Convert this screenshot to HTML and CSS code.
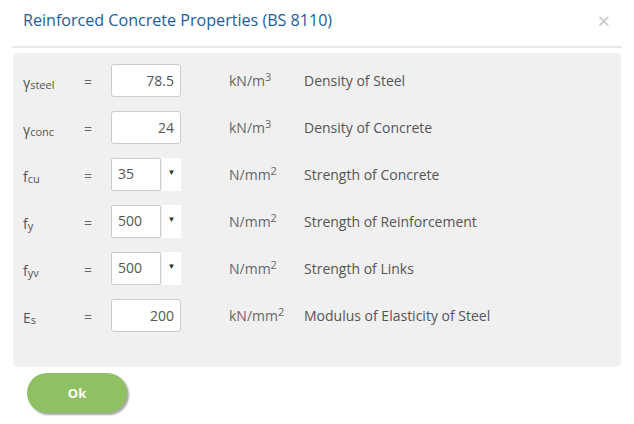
FILE: index.html
```html
<!DOCTYPE html>
<html>
<head>
<meta charset="utf-8">
<link rel="stylesheet" href="styles.css">
</head>
<body>
<div class="modal">
  <div class="header">
    <h1 class="title">Reinforced Concrete Properties (BS 8110)</h1>
    <span class="close">×</span>
  </div>
  <div class="panel">
    <div class="row">
      <div class="sym">γ<sub>steel</sub></div>
      <div class="eq">=</div>
      <div class="field"><div class="input">78.5</div></div>
      <div class="unit">kN/m<sup>3</sup></div>
      <div class="desc">Density of Steel</div>
    </div>
    <div class="row">
      <div class="sym">γ<sub>conc</sub></div>
      <div class="eq">=</div>
      <div class="field"><div class="input">24</div></div>
      <div class="unit">kN/m<sup>3</sup></div>
      <div class="desc">Density of Concrete</div>
    </div>
    <div class="row">
      <div class="sym">f<sub>cu</sub></div>
      <div class="eq">=</div>
      <div class="field"><div class="select"><span class="sel-val">35</span><span class="arrow">▼</span></div></div>
      <div class="unit">N/mm<sup>2</sup></div>
      <div class="desc">Strength of Concrete</div>
    </div>
    <div class="row">
      <div class="sym">f<sub>y</sub></div>
      <div class="eq">=</div>
      <div class="field"><div class="select"><span class="sel-val">500</span><span class="arrow">▼</span></div></div>
      <div class="unit">N/mm<sup>2</sup></div>
      <div class="desc">Strength of Reinforcement</div>
    </div>
    <div class="row">
      <div class="sym">f<sub>yv</sub></div>
      <div class="eq">=</div>
      <div class="field"><div class="select"><span class="sel-val">500</span><span class="arrow">▼</span></div></div>
      <div class="unit">N/mm<sup>2</sup></div>
      <div class="desc">Strength of Links</div>
    </div>
    <div class="row">
      <div class="sym">E<sub>s</sub></div>
      <div class="eq">=</div>
      <div class="field"><div class="input">200</div></div>
      <div class="unit">kN/mm<sup>2</sup></div>
      <div class="desc">Modulus of Elasticity of Steel</div>
    </div>
  </div>
  <div class="footer">
    <button class="ok">Ok</button>
  </div>
</div>
</body>
</html>
```

FILE: styles.css
```css
* { box-sizing: border-box; }
html, body { margin: 0; padding: 0; background: #fff; }
body {
  font-family: "Open Sans", "Noto Sans", sans-serif;
  color: #555;
  width: 634px;
  height: 424px;
  overflow: hidden;
}
.modal { padding: 0 12px 0 12px; }
.header {
  display: flex;
  justify-content: space-between;
  align-items: center;
  height: 48px;
  padding: 0 6px 6px 11px;
  border-bottom: 2px solid #e8e8e8;
}
.title {
  margin: 0;
  font-size: 16.1px;
  font-weight: 400;
  color: #1d5d9b;
}
.close {
  font-size: 22px;
  color: #c4c4c4;
  line-height: 1;
  margin-top: 0;
  margin-right: 6px;
}
.panel {
  margin: 5px 1px 0 1px;
  background: #f0f0f0;
  border-radius: 5px;
  padding: 11px 0 37px 10px;
  display: flex;
  flex-direction: column;
  gap: 14px;
  height: 314px;
}
.row {
  display: flex;
  align-items: center;
  height: 33px;
  font-size: 14px;
}
.sym {
  width: 61px;
  font-size: 14px;
  color: #555;
  padding-top: 3px;
}
.sym sub {
  font-size: 11px;
  vertical-align: -1px;
}
.eq {
  width: 27px;
  color: #666;
  font-size: 14px;
  padding-top: 2px;
}
.field { width: 118px; }
.input {
  width: 70px;
  height: 33px;
  background: #fff;
  border: 1px solid #ccc;
  border-radius: 3px;
  text-align: right;
  padding: 0 6px;
  line-height: 31px;
  font-size: 14px;
  color: #555;
}
.select {
  display: flex;
  width: 70px;
  height: 33px;
}
.sel-val {
  width: 50px;
  height: 33px;
  background: #fff;
  border: 1px solid #ccc;
  border-radius: 2px;
  padding-left: 6px;
  line-height: 29px;
  font-size: 14px;
}
.arrow {
  flex: 1;
  margin-left: 1px;
  background: #fff;
  font-size: 8px;
  text-align: center;
  line-height: 27px;
  color: #333;
}
.unit {
  width: 75px;
  font-size: 14px;
  color: #666;
}
.unit sup {
  font-size: 11px;
  vertical-align: 5px;
  line-height: 0;
}
.desc {
  font-size: 14px;
  color: #555;
}
.footer { padding: 6px 0 0 15px; }
.ok {
  width: 100px;
  height: 40px;
  border: none;
  border-radius: 20px;
  background: #8fc064;
  color: #fff;
  font-family: "Open Sans", sans-serif;
  font-weight: 700;
  font-size: 13px;
  box-shadow: 2px 2px 2px rgba(0,0,0,0.35);
  padding: 0;
}
```
